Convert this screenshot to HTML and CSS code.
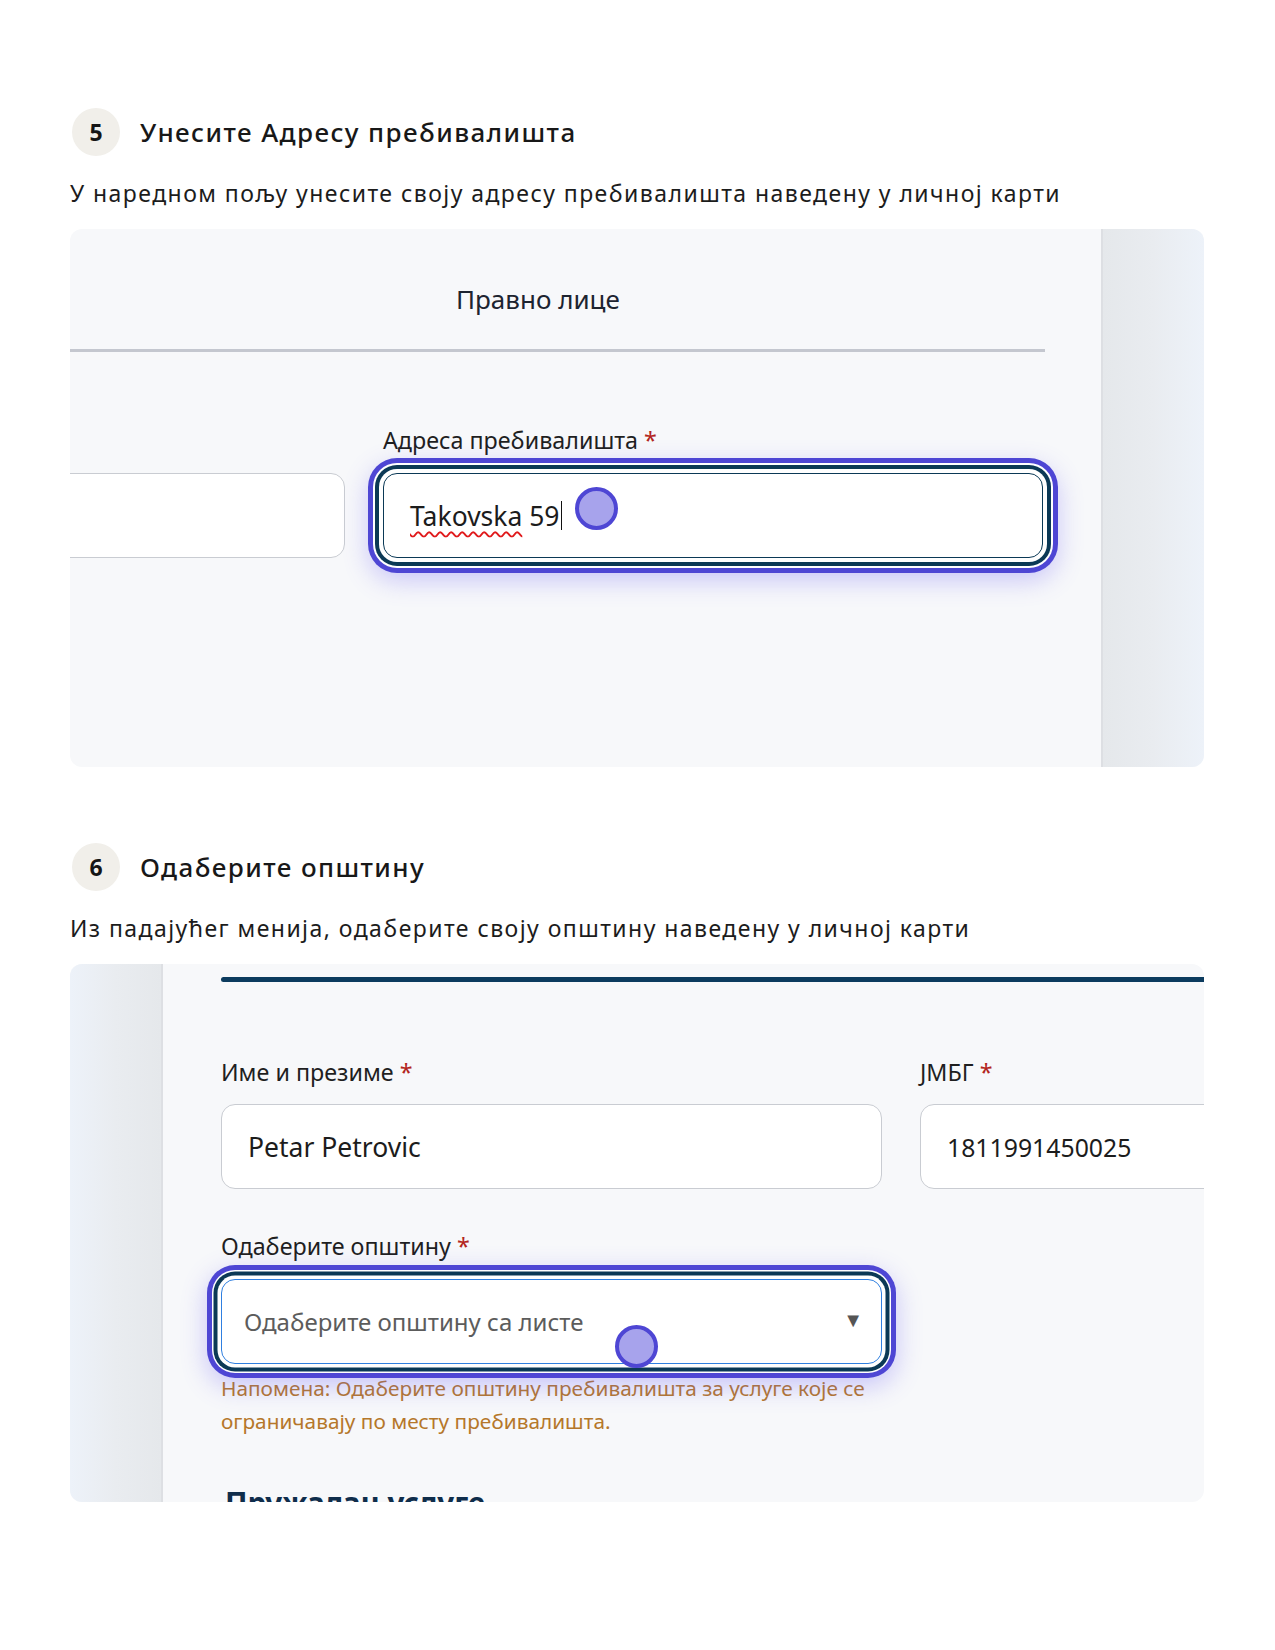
FILE: index.html
```html
<!DOCTYPE html>
<html lang="sr">
<head>
<meta charset="utf-8">
<title>Упутство</title>
<link rel="stylesheet" href="styles.css">
</head>
<body>
<main class="page">
  <section class="step step-5">
    <div class="step-head">
      <span class="badge">5</span>
      <h2 class="step-title">Унесите Адресу пребивалишта</h2>
    </div>
    <p class="step-desc">У наредном пољу унесите своју адресу пребивалишта наведену у личној карти</p>
    <div class="shot shot-right">
      <div class="shot-main">
        <div class="tabs">
          <div class="tab">Правно лице</div>
        </div>
        <div class="form-row form-row-1">
          <div class="col col-hidden">
            <div class="label">&nbsp;</div>
            <div class="input"></div>
          </div>
          <div class="col col-wide">
            <div class="label">Адреса пребивалишта <span class="req">*</span></div>
            <div class="input input-focus">
              <span class="typed"><span class="spell">Takovska</span> 59</span><span class="caret"></span>
              <span class="pointer pointer-1"></span>
            </div>
          </div>
        </div>
      </div>
      <div class="side side-right"></div>
    </div>
  </section>

  <section class="step step-6">
    <div class="step-head">
      <span class="badge">6</span>
      <h2 class="step-title">Одаберите општину</h2>
    </div>
    <p class="step-desc">Из падајућег менија, одаберите своју општину наведену у личној карти</p>
    <div class="shot shot-left">
      <div class="side side-left"></div>
      <div class="shot-main shot-main-2">
        <div class="navy-rule"></div>
        <div class="form-row form-row-2">
          <div class="col col-name">
            <div class="label">Име и презиме <span class="req">*</span></div>
            <div class="input"><span class="value">Petar Petrovic</span></div>
          </div>
          <div class="col col-jmbg">
            <div class="label">ЈМБГ <span class="req">*</span></div>
            <div class="input"><span class="value value-num">1811991450025</span></div>
          </div>
        </div>
        <div class="col col-name col-select">
          <div class="label">Одаберите општину <span class="req">*</span></div>
          <div class="input select-focus">
            <span class="placeholder">Одаберите општину са листе</span>
            <span class="arrow">▼</span>
            <span class="pointer pointer-2"></span>
          </div>
          <p class="note">Напомена: Одаберите општину пребивалишта за услуге које се ограничавају по месту пребивалишта.</p>
        </div>
        <h3 class="provider">Пружалац услуге</h3>
      </div>
    </div>
  </section>
</main>
</body>
</html>
```

FILE: styles.css
```css
* { box-sizing: border-box; }
html, body { margin: 0; padding: 0; background: #ffffff; }
body { font-family: "Noto Sans", "Open Sans", sans-serif; color: #1b1b1b; }

.page { padding: 108px 71px 0 70px; width: 1275px; }

.step-6 { margin-top: 76px; }

.step-head { display: flex; align-items: center; gap: 20px; height: 48px; }
.badge {
  width: 48px; height: 48px; border-radius: 50%;
  background: #f1efea; color: #151515;
  display: flex; align-items: center; justify-content: center;
  font-weight: 700; font-size: 23px;
  margin-left: 2px;
}
.step-title { margin: 0; font-size: 26px; font-weight: 500; letter-spacing: 1.4px; color: #181818; }
.step-desc { margin: 22px 0 0 0; font-size: 23px; line-height: 30px; letter-spacing: 1.45px; color: #1c1c1c; }

.shot {
  margin-top: 21px; height: 538px; border-radius: 12px; overflow: hidden;
  background: #f7f8fa; display: flex;
}
.shot-main { flex: 1; position: relative; overflow: hidden; }
.side { width: 103px; flex: none; }
.side-right { background: linear-gradient(90deg, #e5e8eb 0%, #e9ecf0 50%, #edf2f9 100%); border-left: 2px solid #dddfe3; }
.side-left { width: 93px; background: linear-gradient(90deg, #edf2f9 0%, #e9ecf0 50%, #e5e8eb 100%); border-right: 2px solid #dddfe3; }

/* card 1 */
.tabs { width: 975px; border-bottom: 3px solid #c4c7cf; padding: 52px 0 32px 386px; }
.tab { font-size: 26px; line-height: 36px; color: #1d2430; }

.form-row { display: flex; gap: 38px; }
.form-row-1 { margin-top: 73px; margin-left: -385px; }
.col { width: 660px; flex: none; }
.label { font-size: 23.3px; line-height: 30px; color: #1f1f1f; margin-bottom: 18px; }
.req { color: #b3261e; }
.input {
  height: 85px; background: #ffffff; border: 1.5px solid #c9ccd2; border-radius: 14px;
  display: flex; align-items: center; padding: 0 26px; position: relative;
  font-size: 26.5px; color: #1c1c1c;
}
.input-focus {
  border-color: #0b3956;
  box-shadow: 0 0 0 4px #ffffff, 0 0 0 8px #0b3956, 0 0 0 10px #ffffff, 0 0 0 15px #4e46d4,
              0 8px 26px 14px rgba(98, 88, 245, 0.32);
}
.typed { font-size: 26.5px; }
.spell { text-decoration: underline wavy #e0191b; text-decoration-thickness: 1.5px; text-underline-offset: 5px; text-decoration-skip-ink: none; }
.caret { display: inline-block; width: 1.5px; height: 29px; background: #111; margin-left: 1px; }

.pointer {
  position: absolute; width: 43px; height: 43px; border-radius: 50%;
  background: #a7a3ec; border: 4px solid #4e46d4;
}
.pointer-1 { left: 191px; top: 13px; }

/* card 2 */
.shot-main-2 { padding-left: 58px; }
.navy-rule { height: 5px; background: #0c3b5e; margin-top: 13px; margin-right: -20px; border-radius: 3px 0 0 3px; }
.form-row-2 { margin-top: 75px; }
.col-name { width: 661px; }
.col-name .label, .col-jmbg .label { margin-bottom: 17px; }
.value { font-size: 26.5px; color: #1c1c1c; }
.value-num { font-size: 24.8px; }
.col-select { margin-top: 42px; }
.col-select .label { margin-bottom: 18px; }
.select-focus {
  border-color: #2f7fe0; padding-left: 22px;
  box-shadow: 0 0 0 3.5px #ffffff, 0 0 0 7.5px #0b3956, 0 0 0 9px #ffffff, 0 0 0 14px #4e46d4,
              0 8px 26px 14px rgba(98, 88, 245, 0.32);
}
.placeholder { font-size: 24px; color: #5c5c5c; }
.arrow { position: absolute; right: 18px; top: 26px; font-size: 20px; color: #555; }
.pointer-2 { left: 393px; top: 45px; }
.note { margin: 8px 0 0 0; font-size: 20.8px; line-height: 33px; color: #b5772a; width: 670px; }
.provider { margin: 47px 0 0 4px; font-size: 29.5px; line-height: 36px; font-weight: 700; color: #0f2d4b; }
```
